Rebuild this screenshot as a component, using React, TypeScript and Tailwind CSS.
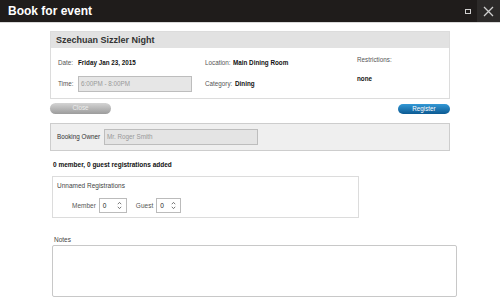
const Spinner = () => (
  <svg width="5" height="9" viewBox="0 0 5 9" className="shrink-0">
    <path d="M0.8 3.2 L2.5 1.4 L4.2 3.2" fill="none" stroke="#555" strokeWidth="0.8" />
    <path d="M0.8 5.8 L2.5 7.6 L4.2 5.8" fill="none" stroke="#555" strokeWidth="0.8" />
  </svg>
);

const NumberBox = ({ w }: { w: string }) => (
  <div className={`${w} h-[15px] border border-[#bbb] bg-white flex items-center justify-between pl-[3px] pr-[4px] text-[6.5px] text-[#222]`}>
    <span>0</span>
    <Spinner />
  </div>
);

const App = () => {
  return (
    <div className="w-[500px] h-[305px] bg-white overflow-hidden font-['Liberation_Sans',Arial,sans-serif]">
      {/* title bar */}
      <div className="h-[23px] bg-[#1f1c1b] border-b border-[#d9d9d9] flex items-center">
        <span className="pl-[8px] text-[12px] font-bold text-white leading-none flex-1">Book for event</span>
        <div className="w-[6px] h-[5px] border border-[#cfcfcf] mr-[6px]" />
        <div className="w-[23px] h-full bg-[#2c2a29] flex items-center justify-center">
          <svg width="11" height="11" viewBox="0 0 11 11">
            <path d="M1 1 L10 10 M10 1 L1 10" stroke="#cfcfcf" strokeWidth="1.3" />
          </svg>
        </div>
      </div>

      <div className="pl-[50px] pt-[8px]">
        {/* event panel */}
        <div className="w-[400px] border border-[#dcdcdc]">
          <div className="h-[16px] bg-[#e2e2e2] px-[5px] flex items-center">
            <span className="text-[9px] font-bold text-[#333] leading-none">Szechuan Sizzler Night</span>
          </div>
          <div className="h-[50px] pl-[7px] flex text-[6.3px] text-[#555]">
            <div className="w-[147px] pt-[10px] flex flex-col">
              <div className="h-[10px] flex items-center">
                <span className="w-[20px]">Date:</span>
                <span className="font-bold text-[#111]">Friday Jan 23, 2015</span>
              </div>
              <div className="mt-[8px] flex items-center">
                <span className="w-[20px]">Time:</span>
                <div className="w-[114px] h-[16px] bg-[#e6e6e6] border border-[#bdbdbd] flex items-center pl-[2px] text-[#999]">
                  6:00PM - 8:00PM
                </div>
              </div>
            </div>
            <div className="w-[152px] pt-[10px] flex flex-col">
              <div className="h-[10px] flex items-center">
                <span className="w-[28px]">Location:</span>
                <span className="font-bold text-[#111]">Main Dining Room</span>
              </div>
              <div className="mt-[8px] h-[16px] flex items-center">
                <span className="w-[30px]">Category:</span>
                <span className="font-bold text-[#111]">Dining</span>
              </div>
            </div>
            <div className="pt-[7px] flex flex-col">
              <div className="h-[10px] flex items-center">Restrictions:</div>
              <div className="mt-[9px] h-[10px] flex items-center font-bold text-[#111]">none</div>
            </div>
          </div>
        </div>

        {/* buttons */}
        <div className="w-[400px] mt-[4px] flex justify-between items-start">
          <button className="w-[61px] h-[11px] rounded-full bg-gradient-to-b from-[#d4d4d4] to-[#9c9c9c] text-[6.3px] text-[#eee] leading-none flex items-center justify-center">
            Close
          </button>
          <button className="w-[52px] h-[10px] mt-[1px] rounded-full bg-gradient-to-b from-[#3399d6] to-[#0b5a93] text-[6.3px] text-white leading-none flex items-center justify-center">
            Register
          </button>
        </div>

        {/* booking owner */}
        <div className="w-[400px] h-[28px] mt-[9px] bg-[#efefef] border border-[#cdcdcd] flex items-center pl-[6px]">
          <span className="text-[6.3px] text-[#333] mr-[4px]">Booking Owner</span>
          <div className="w-[154px] h-[16px] bg-[#e4e4e4] border border-[#bdbdbd] flex items-center pl-[2px] text-[6.3px] text-[#999]">
            Mr. Roger Smith
          </div>
        </div>

        <div className="mt-[10px] pl-[3px] text-[6.5px] font-bold text-[#111] leading-[8px]">
          0 member, 0 guest registrations added
        </div>

        {/* unnamed registrations */}
        <div className="ml-[2px] mt-[7px] w-[307px] h-[42px] border border-[#dcdcdc] pl-[4px] pt-[5px]">
          <div className="text-[6.5px] text-[#444] leading-[8px]">Unnamed Registrations</div>
          <div className="mt-[8px] pl-[15px] flex items-center text-[6.5px] text-[#555]">
            <span className="mr-[3px]">Member</span>
            <NumberBox w="w-[28px]" />
            <span className="ml-[9px] mr-[3px]">Guest</span>
            <NumberBox w="w-[25px]" />
          </div>
        </div>

        {/* notes */}
        <div className="mt-[18px] pl-[4px] text-[6.5px] text-[#444] leading-[8px]">Notes</div>
        <div className="ml-[2px] mt-[1px] w-[405px] h-[52px] border-[1.5px] border-[#c8c8c8] rounded-[2px]" />
      </div>
    </div>
  );
};

export default App;
